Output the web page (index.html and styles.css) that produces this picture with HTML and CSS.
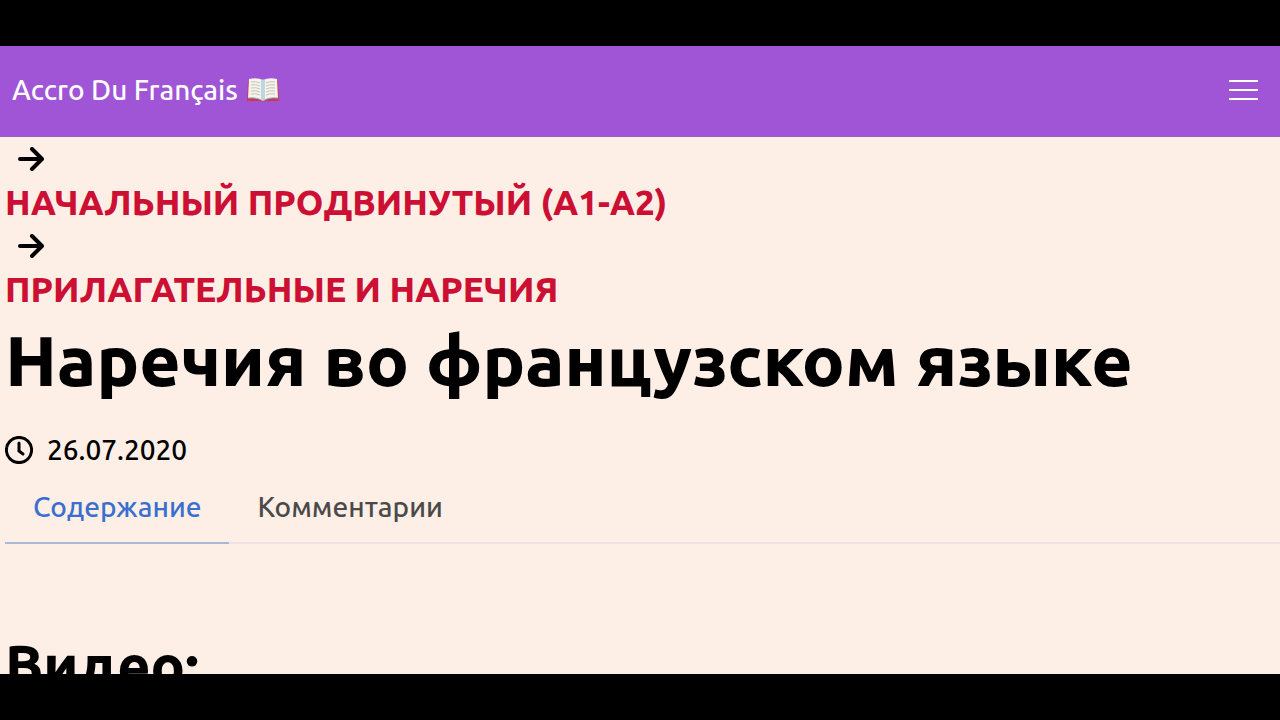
FILE: index.html
```
<!DOCTYPE html>
<html lang="ru">
<head>
    <meta charset="UTF-8">
    <meta name="viewport" content="width=device-width, initial-scale=1.0">
    <title>Наречия во французском языке</title>
    <link rel="stylesheet" href="styles.css">
</head>
<body>
    <div class="page">
        <nav class="navbar">
            <a class="brand" href="#">Accro Du Français
                <svg class="book" viewBox="0 0 34 26" aria-hidden="true">
                    <path d="M2 4H32L33 24H20Q17 26 14 24H1Z" fill="#c83a52"/>
                    <path d="M3 2Q11 0 17 3Q23 0 31 2L32 21Q22 20 17 24Q12 20 2 21Z" fill="#f5f3ea"/>
                    <path d="M15 3Q17 2 19 3V22L17 24L15 22Z" fill="#bfd6e2"/>
                    <path d="M2 21Q12 20 17 24Q22 20 32 21" fill="none" stroke="#8fb6c8"/>
                    <path d="M5 5Q10 4 14 6M5 8Q10 7 14 9M5 11Q10 10 14 12M5 14Q10 13 14 15M5 17Q10 16 14 18M20 6Q24 4 29 5M20 9Q24 7 29 8M20 12Q24 10 29 11M20 15Q24 13 29 14M20 18Q24 16 29 17" fill="none" stroke="#c4c4bc"/>
                </svg>
            </a>
            <button class="burger" type="button" aria-label="Меню">
                <span></span>
                <span></span>
                <span></span>
            </button>
        </nav>

        <main class="content">
            <div class="crumbs">
                <svg class="arrow" viewBox="0 0 26 24" aria-hidden="true"><path d="M2 12H23M14 2L24 12L14 22"/></svg>
                <a href="#">НАЧАЛЬНЫЙ ПРОДВИНУТЫЙ (А1-А2)</a>
                <svg class="arrow" viewBox="0 0 26 24" aria-hidden="true"><path d="M2 12H23M14 2L24 12L14 22"/></svg>
                <a href="#">ПРИЛАГАТЕЛЬНЫЕ И НАРЕЧИЯ</a>
            </div>

            <h1>Наречия во французском языке</h1>

            <div class="date">
                <svg viewBox="0 0 28 28" aria-hidden="true"><circle cx="14" cy="14" r="12.6"/><path d="M14 7V15L18 18"/></svg>
                <time datetime="2020-07-26">26.07.2020</time>
            </div>

            <div class="tabs">
                <a class="tab active" href="#">Содержание</a>
                <a class="tab" href="#">Комментарии</a>
            </div>

            <h2>Видео:</h2>
        </main>
    </div>
</body>
</html>
```
FILE: styles.css
```
* {
    box-sizing: border-box;
}

body {
    margin: 0;
    background-color: #000;
    color: #000;
    font-family: Ubuntu, "Noto Sans", sans-serif;
    font-size: 28px;
    font-weight: 500;
}

.page {
    height: 100vh;
    padding: 46px 0;
    display: flex;
    flex-direction: column;
}

.navbar {
    display: flex;
    flex: none;
    justify-content: space-between;
    align-items: center;
    padding: 22px 22px 24px 12px;
    background-color: #9f55d6;
    border-bottom: 1px solid #9a62c0;
}

.brand {
    display: flex;
    align-items: center;
    gap: 8px;
    color: #fff;
    line-height: 44px;
    text-decoration: none;
}

.book {
    width: 34px;
    height: 26px;
}

.burger {
    display: flex;
    flex-direction: column;
    gap: 7px;
    width: 29px;
    padding: 0;
    border: none;
    background: none;
    cursor: pointer;
}

.burger span {
    height: 2px;
    background-color: #fff;
}

.content {
    flex: 1;
    min-height: 0;
    overflow: hidden;
    padding-left: 5px;
    background-color: #fdefe6;
}

.crumbs {
    display: flex;
    flex-direction: column;
    align-items: flex-start;
}

.crumbs a {
    color: #cc1034;
    font-size: 35px;
    font-weight: 800;
    line-height: 44px;
    text-decoration: none;
}

.arrow {
    width: 26px;
    height: 24px;
    margin: 10px 13px 9px;
    fill: none;
    stroke: #000;
    stroke-width: 4;
    stroke-linecap: round;
    stroke-linejoin: round;
}

h1 {
    margin: 0;
    font-size: 71px;
    font-weight: 800;
    line-height: 98px;
}

.date {
    display: flex;
    align-items: center;
    gap: 14px;
    margin-top: 19px;
    line-height: 44px;
}

.date svg {
    width: 28px;
    height: 28px;
    fill: none;
    stroke: #000;
    stroke-width: 3;
    stroke-linecap: round;
}

.tabs {
    display: flex;
    border-bottom: 2px solid #f0e2e2;
}

.tab {
    margin-bottom: -2px;
    padding: 14px 28px;
    border-bottom: 2px solid transparent;
    color: #4a4a4a;
    line-height: 42px;
    text-decoration: none;
}

.tab.active {
    border-color: #a9b8d8;
    color: #3a6fd0;
}

h2 {
    margin: 82px 0 0;
    font-size: 57px;
    font-weight: 800;
    line-height: 78px;
}
```
